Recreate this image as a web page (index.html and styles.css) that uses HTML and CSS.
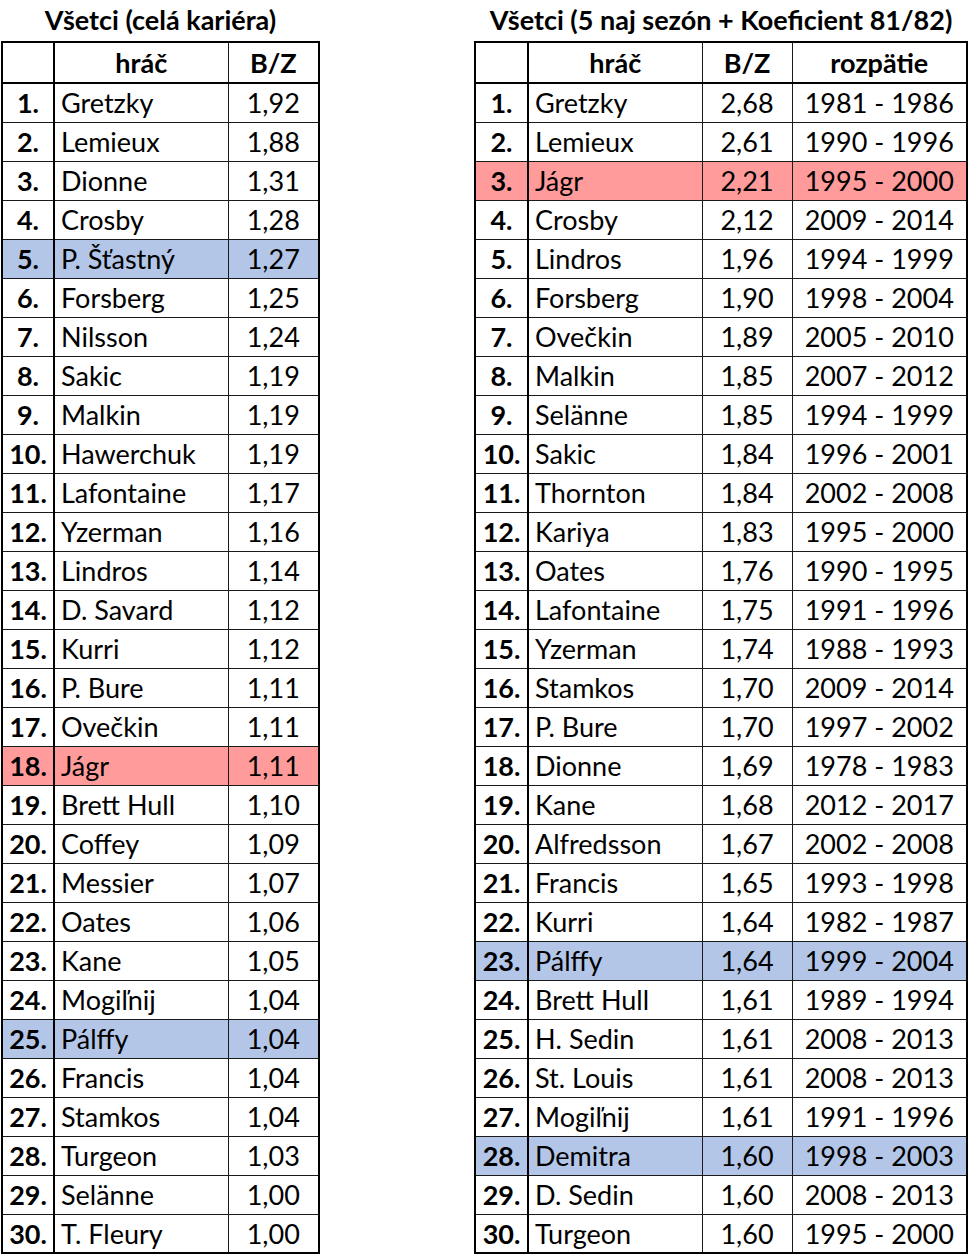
FILE: index.html
```html
<!DOCTYPE html>
<html lang="sk">
<head>
<meta charset="utf-8">
<title>Všetci</title>
<link rel="stylesheet" href="styles.css">
</head>
<body>
<div class="page">
  <section class="block block-left">
    <h2 class="title">Všetci (celá kariéra)</h2>
    <table class="grid grid-left">
      <colgroup><col class="c-num"><col class="c-name"><col class="c-val"></colgroup>
      <thead><tr><th></th><th>hráč</th><th>B/Z</th></tr></thead>
      <tbody>
        <tr><td class="n">1.</td><td class="p">Gretzky</td><td class="v">1,92</td></tr>
        <tr><td class="n">2.</td><td class="p">Lemieux</td><td class="v">1,88</td></tr>
        <tr><td class="n">3.</td><td class="p">Dionne</td><td class="v">1,31</td></tr>
        <tr><td class="n">4.</td><td class="p">Crosby</td><td class="v">1,28</td></tr>
        <tr class="blue"><td class="n">5.</td><td class="p">P. Šťastný</td><td class="v">1,27</td></tr>
        <tr><td class="n">6.</td><td class="p">Forsberg</td><td class="v">1,25</td></tr>
        <tr><td class="n">7.</td><td class="p">Nilsson</td><td class="v">1,24</td></tr>
        <tr><td class="n">8.</td><td class="p">Sakic</td><td class="v">1,19</td></tr>
        <tr><td class="n">9.</td><td class="p">Malkin</td><td class="v">1,19</td></tr>
        <tr><td class="n">10.</td><td class="p">Hawerchuk</td><td class="v">1,19</td></tr>
        <tr><td class="n">11.</td><td class="p">Lafontaine</td><td class="v">1,17</td></tr>
        <tr><td class="n">12.</td><td class="p">Yzerman</td><td class="v">1,16</td></tr>
        <tr><td class="n">13.</td><td class="p">Lindros</td><td class="v">1,14</td></tr>
        <tr><td class="n">14.</td><td class="p">D. Savard</td><td class="v">1,12</td></tr>
        <tr><td class="n">15.</td><td class="p">Kurri</td><td class="v">1,12</td></tr>
        <tr><td class="n">16.</td><td class="p">P. Bure</td><td class="v">1,11</td></tr>
        <tr><td class="n">17.</td><td class="p">Ovečkin</td><td class="v">1,11</td></tr>
        <tr class="red"><td class="n">18.</td><td class="p">Jágr</td><td class="v">1,11</td></tr>
        <tr><td class="n">19.</td><td class="p">Brett Hull</td><td class="v">1,10</td></tr>
        <tr><td class="n">20.</td><td class="p">Coffey</td><td class="v">1,09</td></tr>
        <tr><td class="n">21.</td><td class="p">Messier</td><td class="v">1,07</td></tr>
        <tr><td class="n">22.</td><td class="p">Oates</td><td class="v">1,06</td></tr>
        <tr><td class="n">23.</td><td class="p">Kane</td><td class="v">1,05</td></tr>
        <tr><td class="n">24.</td><td class="p">Mogiľnij</td><td class="v">1,04</td></tr>
        <tr class="blue"><td class="n">25.</td><td class="p">Pálffy</td><td class="v">1,04</td></tr>
        <tr><td class="n">26.</td><td class="p">Francis</td><td class="v">1,04</td></tr>
        <tr><td class="n">27.</td><td class="p">Stamkos</td><td class="v">1,04</td></tr>
        <tr><td class="n">28.</td><td class="p">Turgeon</td><td class="v">1,03</td></tr>
        <tr><td class="n">29.</td><td class="p">Selänne</td><td class="v">1,00</td></tr>
        <tr><td class="n">30.</td><td class="p">T. Fleury</td><td class="v">1,00</td></tr>
      </tbody>
    </table>
  </section>
  <section class="block block-right">
    <h2 class="title">Všetci (5 naj sezón + Koeficient 81/82)</h2>
    <table class="grid grid-right">
      <colgroup><col class="c-num"><col class="c-name"><col class="c-val"><col class="c-span"></colgroup>
      <thead><tr><th></th><th>hráč</th><th>B/Z</th><th>rozpätie</th></tr></thead>
      <tbody>
        <tr><td class="n">1.</td><td class="p">Gretzky</td><td class="v">2,68</td><td class="v">1981 - 1986</td></tr>
        <tr><td class="n">2.</td><td class="p">Lemieux</td><td class="v">2,61</td><td class="v">1990 - 1996</td></tr>
        <tr class="red"><td class="n">3.</td><td class="p">Jágr</td><td class="v">2,21</td><td class="v">1995 - 2000</td></tr>
        <tr><td class="n">4.</td><td class="p">Crosby</td><td class="v">2,12</td><td class="v">2009 - 2014</td></tr>
        <tr><td class="n">5.</td><td class="p">Lindros</td><td class="v">1,96</td><td class="v">1994 - 1999</td></tr>
        <tr><td class="n">6.</td><td class="p">Forsberg</td><td class="v">1,90</td><td class="v">1998 - 2004</td></tr>
        <tr><td class="n">7.</td><td class="p">Ovečkin</td><td class="v">1,89</td><td class="v">2005 - 2010</td></tr>
        <tr><td class="n">8.</td><td class="p">Malkin</td><td class="v">1,85</td><td class="v">2007 - 2012</td></tr>
        <tr><td class="n">9.</td><td class="p">Selänne</td><td class="v">1,85</td><td class="v">1994 - 1999</td></tr>
        <tr><td class="n">10.</td><td class="p">Sakic</td><td class="v">1,84</td><td class="v">1996 - 2001</td></tr>
        <tr><td class="n">11.</td><td class="p">Thornton</td><td class="v">1,84</td><td class="v">2002 - 2008</td></tr>
        <tr><td class="n">12.</td><td class="p">Kariya</td><td class="v">1,83</td><td class="v">1995 - 2000</td></tr>
        <tr><td class="n">13.</td><td class="p">Oates</td><td class="v">1,76</td><td class="v">1990 - 1995</td></tr>
        <tr><td class="n">14.</td><td class="p">Lafontaine</td><td class="v">1,75</td><td class="v">1991 - 1996</td></tr>
        <tr><td class="n">15.</td><td class="p">Yzerman</td><td class="v">1,74</td><td class="v">1988 - 1993</td></tr>
        <tr><td class="n">16.</td><td class="p">Stamkos</td><td class="v">1,70</td><td class="v">2009 - 2014</td></tr>
        <tr><td class="n">17.</td><td class="p">P. Bure</td><td class="v">1,70</td><td class="v">1997 - 2002</td></tr>
        <tr><td class="n">18.</td><td class="p">Dionne</td><td class="v">1,69</td><td class="v">1978 - 1983</td></tr>
        <tr><td class="n">19.</td><td class="p">Kane</td><td class="v">1,68</td><td class="v">2012 - 2017</td></tr>
        <tr><td class="n">20.</td><td class="p">Alfredsson</td><td class="v">1,67</td><td class="v">2002 - 2008</td></tr>
        <tr><td class="n">21.</td><td class="p">Francis</td><td class="v">1,65</td><td class="v">1993 - 1998</td></tr>
        <tr><td class="n">22.</td><td class="p">Kurri</td><td class="v">1,64</td><td class="v">1982 - 1987</td></tr>
        <tr class="blue"><td class="n">23.</td><td class="p">Pálffy</td><td class="v">1,64</td><td class="v">1999 - 2004</td></tr>
        <tr><td class="n">24.</td><td class="p">Brett Hull</td><td class="v">1,61</td><td class="v">1989 - 1994</td></tr>
        <tr><td class="n">25.</td><td class="p">H. Sedin</td><td class="v">1,61</td><td class="v">2008 - 2013</td></tr>
        <tr><td class="n">26.</td><td class="p">St. Louis</td><td class="v">1,61</td><td class="v">2008 - 2013</td></tr>
        <tr><td class="n">27.</td><td class="p">Mogiľnij</td><td class="v">1,61</td><td class="v">1991 - 1996</td></tr>
        <tr class="blue"><td class="n">28.</td><td class="p">Demitra</td><td class="v">1,60</td><td class="v">1998 - 2003</td></tr>
        <tr><td class="n">29.</td><td class="p">D. Sedin</td><td class="v">1,60</td><td class="v">2008 - 2013</td></tr>
        <tr><td class="n">30.</td><td class="p">Turgeon</td><td class="v">1,60</td><td class="v">1995 - 2000</td></tr>
      </tbody>
    </table>
  </section>
</div>
</body>
</html>
```

FILE: styles.css
```css
* { box-sizing: border-box; }
html, body { margin: 0; padding: 0; background: #ffffff; }
body {
  font-family: Lato, "Open Sans", "Liberation Sans", sans-serif;
  color: #000;
}
.page {
  display: flex;
  justify-content: space-between;
  align-items: flex-start;
  padding: 0 2px 0 1px;
}
.block { display: flex; flex-direction: column; align-items: center; }
.title {
  margin: 0;
  height: 41px;
  line-height: 40px;
  font-size: 27px;
  font-weight: 700;
  white-space: nowrap;
}
.grid {
  border-collapse: collapse;
  table-layout: fixed;
  border: 2px solid #000;
  font-size: 27px;
}
.grid-left { width: 317px; }
.grid-right { width: 492px; }
.grid-left .c-num { width: 52px; }
.grid-left .c-name { width: 174px; }
.grid-left .c-val { width: 91px; }
.grid-right .c-num { width: 53px; }
.grid-right .c-name { width: 174px; }
.grid-right .c-val { width: 90px; }
.grid-right .c-span { width: 175px; }

.grid th, .grid td {
  border: 1px solid #1a1a1a;
  padding: 0;
  white-space: nowrap;
  overflow: hidden;
}
.grid th { height: 41px; font-weight: 700; text-align: center; }
.grid td { height: 39px; }
.grid th:first-child, .grid td:first-child { border-right: 2px solid #000; }
.grid thead th { border-bottom: 2px solid #000; }
.n { font-weight: 700; text-align: center; }
.p { text-align: left; padding-left: 6px !important; }
.v { text-align: center; }
.blue td { background: #b4c6e7; }
.red td { background: #ff9b9b; }
```
